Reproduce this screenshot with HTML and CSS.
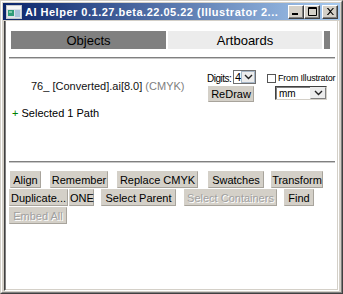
FILE: index.html
```html
<!DOCTYPE html>
<html lang="en">
<head>
    <meta charset="UTF-8">
    <title>AI Helper</title>
    <link rel="stylesheet" href="styles.css">
</head>
<body>
    <div class="window">
        <div class="frame">
            <div class="titlebar">
                <svg class="app-icon" width="16" height="14" viewBox="0 0 16 14">
                    <rect x="0.5" y="0.5" width="15" height="13" fill="#dde2e8" stroke="#c4c8cc"/>
                    <rect x="1" y="1" width="14" height="3" fill="#f6f6f6"/>
                    <rect x="2" y="5" width="6" height="6" fill="#2f9c78"/>
                    <rect x="3" y="6" width="3" height="2" fill="#7cc8a8"/>
                    <rect x="9" y="5" width="5" height="7" fill="#a9c3da"/>
                </svg>
                <span class="title">AI Helper 0.1.27.beta.22.05.22 (Illustrator 2...</span>
                <div class="caption-buttons">
                    <span class="cap">
                        <svg width="8" height="7" viewBox="0 0 8 7"><rect x="0" y="5" width="6" height="2" fill="#000"/></svg>
                    </span>
                    <span class="cap">
                        <svg width="9" height="9" viewBox="0 0 9 9"><path d="M0.5 0.5h8v8h-8z M0.5 1.5h8" fill="none" stroke="#000"/></svg>
                    </span>
                    <span class="cap cap-close">
                        <svg width="8" height="7" viewBox="0 0 8 7"><path d="M0.8 0h1.4l2.3 2.4 2.3-2.4h1.2l-3 3.5 3 3.5h-1.2l-2.3-2.4-2.3 2.4h-1.4l3-3.5z" fill="#000"/></svg>
                    </span>
                </div>
            </div>

            <div class="client">
                <div class="tabs">
                    <div class="tab tab-active">Objects</div>
                    <div class="tab">Artboards</div>
                    <div class="tab-rest"></div>
                </div>

                <div class="sep"></div>

                <div class="info">
                    <div class="doc-name">76_ [Converted].ai[8.0] <span class="doc-mode">(CMYK)</span></div>
                    <div class="digits-col">
                        <div class="digits-row">
                            <span class="digits-label">Digits:</span>
                            <span class="select select-digits">
                                <span class="select-value">4</span>
                                <span class="select-btn">
                                    <svg width="9" height="6" viewBox="0 0 9 6"><path d="M1 1l3.5 3.5 3.5-3.5" fill="none" stroke="#222" stroke-width="1.4"/></svg>
                                </span>
                            </span>
                        </div>
                        <button class="btn btn-redraw">ReDraw</button>
                    </div>
                    <div class="units-col">
                        <div class="check-row">
                            <span class="checkbox"></span>
                            <span class="check-label">From Illustrator</span>
                        </div>
                        <span class="select select-units">
                            <span class="select-value">mm</span>
                            <span class="select-btn">
                                <svg width="9" height="6" viewBox="0 0 9 6"><path d="M1 1l3.5 3.5 3.5-3.5" fill="none" stroke="#222" stroke-width="1.4"/></svg>
                            </span>
                        </span>
                    </div>
                </div>

                <div class="selection"><span class="plus">+</span> Selected 1 Path</div>

                <div class="sep sep-actions"></div>

                <div class="actions">
                    <div class="btn-row">
                        <button class="btn btn-align">Align</button>
                        <button class="btn btn-remember">Remember</button>
                        <button class="btn btn-replace">Replace CMYK</button>
                        <button class="btn btn-swatches">Swatches</button>
                        <button class="btn btn-transform">Transform</button>
                    </div>
                    <div class="btn-row">
                        <button class="btn btn-duplicate">Duplicate...</button>
                        <button class="btn btn-one">ONE</button>
                        <button class="btn btn-parent">Select Parent</button>
                        <button class="btn btn-containers" disabled>Select Containers</button>
                        <button class="btn btn-find">Find</button>
                    </div>
                    <div class="btn-row">
                        <button class="btn btn-embed" disabled>Embed All</button>
                    </div>
                </div>
            </div>
        </div>
    </div>
</body>
</html>
```

FILE: styles.css
```css
body {
    margin: 0;
    font-family: 'Liberation Sans', Arial, sans-serif;
    font-size: 11px;
    color: #000;
}

.window {
    width: 343px;
    height: 294px;
    box-sizing: border-box;
    display: flex;
    background: #d4d0c8;
    border: 1px solid;
    border-color: #d4d0c8 #404040 #404040 #d4d0c8;
}

.frame {
    flex: 1;
    display: flex;
    flex-direction: column;
    padding: 1px;
    border: 1px solid;
    border-color: #ffffff #808080 #808080 #ffffff;
}

/* title bar */
.titlebar {
    height: 17px;
    display: flex;
    align-items: center;
    padding-left: 3px;
    margin-bottom: 1px;
    background: linear-gradient(to right, #0a246a, #a6caf0);
}

.app-icon {
    flex: none;
}

.title {
    flex: 1;
    margin-left: 3px;
    color: #ffffff;
    font-weight: bold;
    font-size: 11px;
    letter-spacing: 0.5px;
    white-space: nowrap;
    overflow: hidden;
}

.caption-buttons {
    display: flex;
    margin-right: 2px;
}

.cap {
    width: 16px;
    height: 14px;
    box-sizing: border-box;
    display: flex;
    align-items: center;
    justify-content: center;
    background: #d4d0c8;
    border: 1px solid;
    border-color: #ffffff #404040 #404040 #ffffff;
    box-shadow: inset -1px -1px #808080;
}

.cap-close {
    margin-left: 2px;
}

/* client area */
.client {
    flex: 1;
    margin: 0 1px;
    padding-top: 10px;
    background: #ffffff;
    border-left: 1px solid #404040;
    border-right: 1px solid #ffffff;
    border-bottom: 1px solid #ffffff;
    box-shadow: inset 1px 0 #808080, inset -1px -1px #d4d0c8;
}

.tabs {
    display: flex;
    height: 18px;
    margin: 0 6px;
}

.tab {
    width: 154px;
    display: flex;
    align-items: center;
    justify-content: center;
    font-size: 13px;
    background: #ececec;
    margin-right: 2px;
}

.tab-active {
    width: 155px;
    background: #808080;
}

.tab-rest {
    width: 6px;
    background: #808080;
}

.sep {
    height: 1px;
    margin: 8px 3px 0 4px;
    border-top: 1px solid #808080;
    background: #c8c8c8;
}

.info {
    display: flex;
    margin-top: 11px;
    height: 30px;
}

.doc-name {
    width: 176px;
    margin-left: 26px;
    align-self: center;
    padding-top: 2px;
    color: #111;
}

.doc-mode {
    color: #808080;
}

.digits-col {
    width: 49px;
    display: flex;
    flex-direction: column;
    align-items: flex-start;
}

.digits-row {
    display: flex;
    align-items: flex-end;
    height: 14px;
}

.digits-label {
    width: 26px;
    font-size: 10px;
    letter-spacing: -0.5px;
    line-height: 11px;
    white-space: nowrap;
}

.select {
    display: flex;
    box-sizing: border-box;
    background: #ffffff;
    border: 1px solid #707070;
}

.select-value {
    flex: 1;
    padding-left: 2px;
    line-height: 12px;
}

.select-btn {
    width: 13px;
    display: flex;
    align-items: center;
    justify-content: center;
    background: #ececec;
    border: 1px solid #a7b7c7;
}

.select-digits {
    width: 23px;
    height: 14px;
}

.select-digits .select-value {
    padding-left: 1px;
}

.select-digits .select-btn {
    width: 12px;
}

.btn-redraw {
    width: 46px;
    height: 14px;
    margin: 2px 0 0 1px;
    padding: 0;
    border: none;
    line-height: 14px;
}

.units-col {
    margin-left: 11px;
    display: flex;
    flex-direction: column;
}

.check-row {
    display: flex;
    align-items: center;
    height: 14px;
    margin-top: 1px;
}

.checkbox {
    width: 9px;
    height: 9px;
    box-sizing: border-box;
    border: 1px solid #555555;
    background: #ffffff;
}

.check-label {
    margin-left: 2px;
    font-size: 9px;
    letter-spacing: -0.2px;
}

.select-units {
    width: 52px;
    height: 14px;
    margin: 1px 0 0 8px;
    border-color: #404040 #d4d0c8 #d4d0c8 #404040;
    box-shadow: inset 1px 1px #808080;
}

.select-units .select-value {
    padding-left: 3px;
    padding-top: 1px;
    font-size: 10px;
}

.select-units .select-btn {
    width: 14px;
    border-color: #ececec #808080 #808080 #ececec;
}

.selection {
    margin: 7px 0 0 7px;
    line-height: 13px;
}

.plus {
    color: #008000;
}

.sep-actions {
    margin-top: 41px;
}

/* action buttons */
.actions {
    margin-top: 8px;
    padding-left: 4px;
}

.btn-row {
    display: flex;
    margin-bottom: 1px;
}

.btn {
    height: 17px;
    padding: 0;
    font-family: inherit;
    font-size: 11px;
    color: #000;
    background: #d4d0c8;
    border: 1px solid;
    border-color: #d4d0c8 #a8a49c #a8a49c #d4d0c8;
    white-space: nowrap;
}

.btn:disabled {
    color: #a0a0a0;
    text-shadow: 1px 1px #ffffff;
}

.btn-align { width: 31px; margin-left: 1px; }
.btn-remember { width: 58px; margin-left: 9px; }
.btn-replace { width: 81px; margin-left: 9px; }
.btn-swatches { width: 56px; margin-left: 10px; }
.btn-transform { width: 52px; margin-left: 7px; }

.btn-duplicate { width: 59px; }
.btn-one { width: 25px; margin-left: 1px; }
.btn-parent { width: 75px; margin-left: 7px; }
.btn-containers { width: 93px; margin-left: 8px; }
.btn-find { width: 30px; margin-left: 7px; }

.btn-embed { width: 58px; }
```
